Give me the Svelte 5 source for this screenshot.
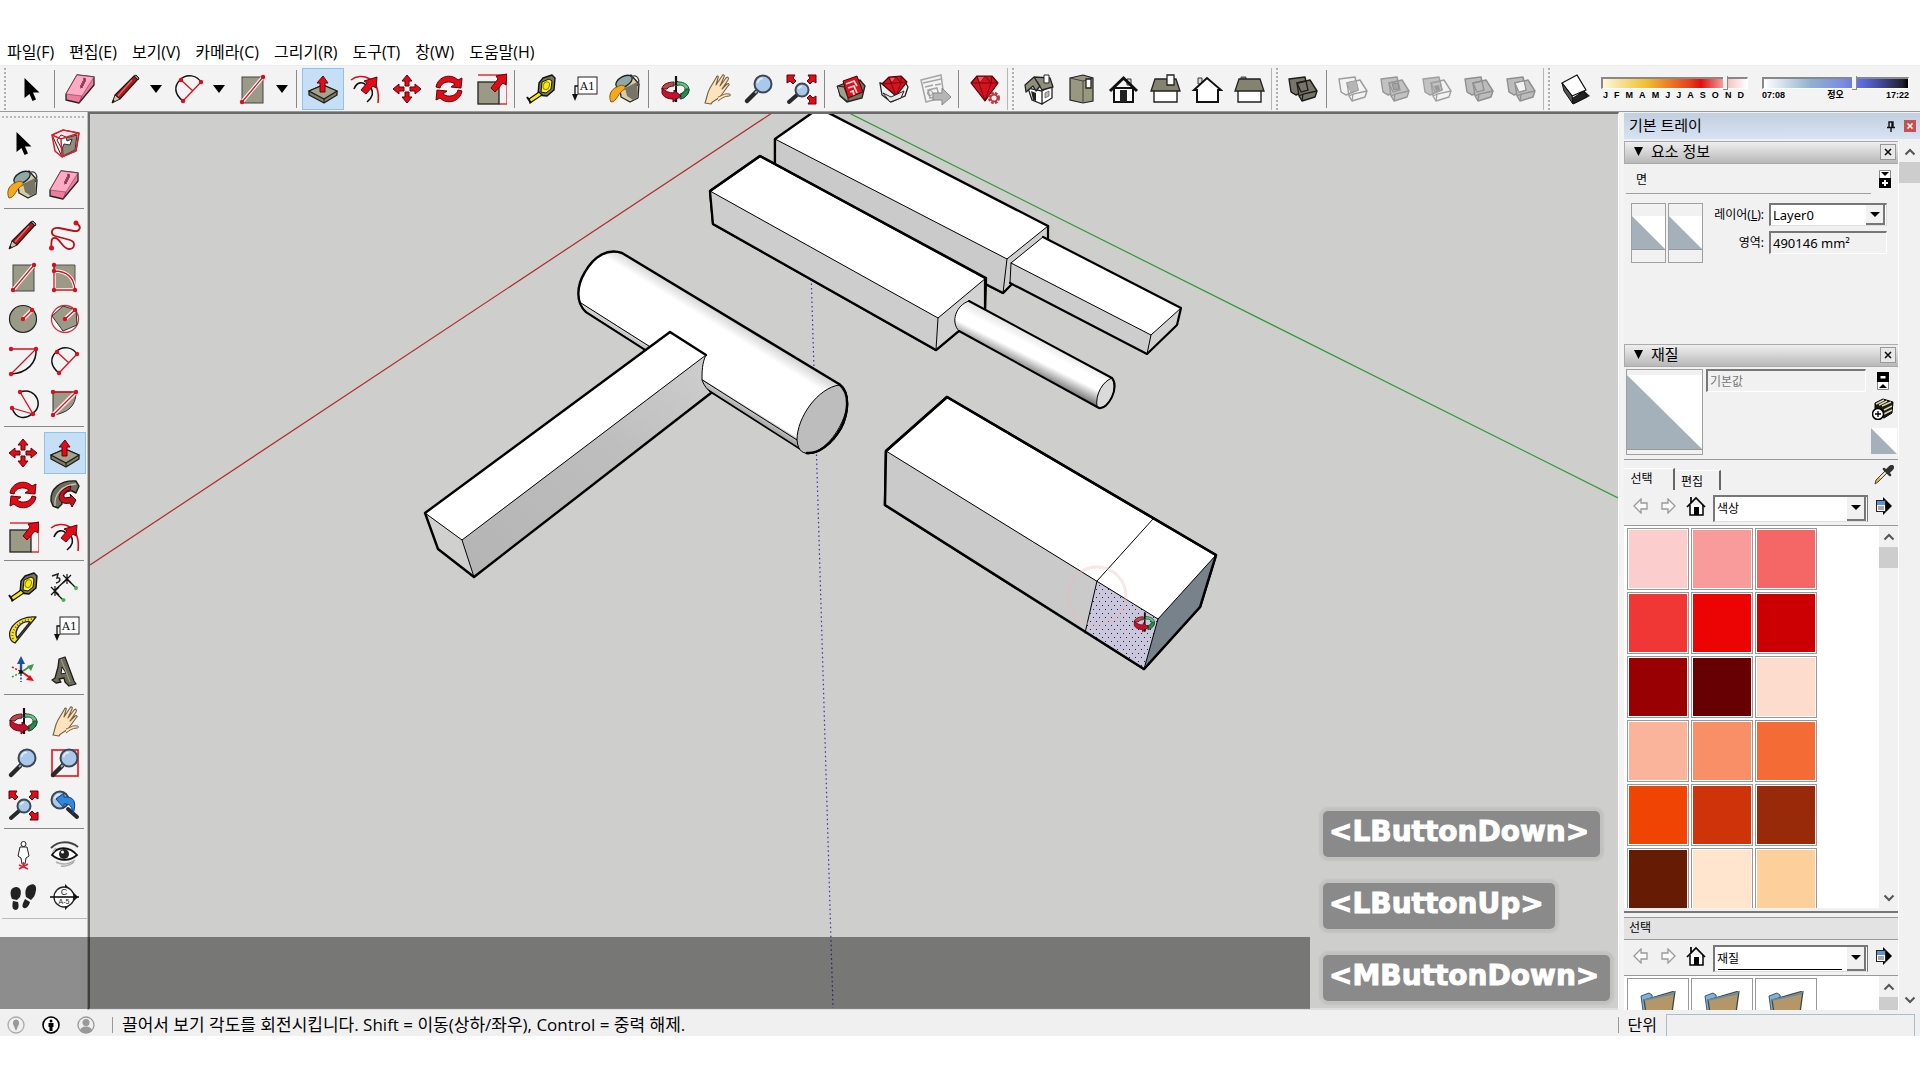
<script>
  const menus = ['파일(F)', '편집(E)', '보기(V)', '카메라(C)', '그리기(R)', '도구(T)', '창(W)', '도움말(H)'];

  const handle = '#9b9a86';
  const solidPair = (a, b, stroke) => `
    <path d="M2 6 18 4l3 13-12 5-5-3z" fill="${a}" stroke="${stroke}" stroke-width="1.400" stroke-linejoin="round"/>
    <path d="M4 19l5 3" fill="none" stroke="${stroke}"/>
    <path d="M10 10 23 7l7 11-2 6-13 4-3-5z" fill="${b}" stroke="${stroke}" stroke-width="1.400" stroke-linejoin="round"/>
    <path d="M12 23l4-2 14-3M16 21l-1 7M10 10l9-2 2 9-7 2z" fill="none" stroke="${stroke}" stroke-width="1.300"/>`;

  const orbit = `
    <path d="M17 4v24" stroke="#111" stroke-width="2"/>
    <path d="M15 9c-7 0-12 3-12 7h5c1-2 4-3 7-3z" fill="#b9474b" stroke="#551417"/>
    <path d="M17 8l-1 5 4-1c4 0 6 2 6 4s-2 4-5 5v5c5-1 9-5 9-9 0-5-5-8-10-8z" fill="#6cc08c" stroke="#14502b"/>
    <path d="M22 21c3-1 5-3 5-5h3c0 5-4 9-8 10z" fill="#2f8a4d" stroke="#14502b"/>
    <path d="M3 15v5c1 4 6 6 11 6v3l8-6-7-6v3c-5 0-9-2-12-5z" fill="#c8102e" stroke="#5a0712"/>
    <path d="M17 3v9M17 25v4" stroke="#111" stroke-width="2.2"/>`;
  const eraser = `
    <path d="M12 2 29 4v8L14 30 1 27v-6z" fill="#ee7d9c" stroke="#222" stroke-width="1.300" stroke-linejoin="round"/>
    <path d="M12 2 29 4 17 23 1 21z" fill="#ffabc6" stroke="#8a3350" stroke-width=".6"/>
    <path d="M17 23l-3 7" stroke="#8a3350" stroke-width=".8"/>
    <path d="M18 5l3 1-3 1 3 1-4 1 3 1-4 1 3 1-4 1 3 1-3 1" fill="none" stroke="#8a3350"/>`;
  const pencil = `
    <path d="M24 3l4 3-18 20-5-4z" fill="#b3161b" stroke="#1b1b1b" stroke-width="1.200"/>
    <path d="M22 7 8 23" stroke="#e36a6a" stroke-width="1.400"/>
    <path d="M24 3l2-1 3 3-1 2z" fill="#8c8c8c" stroke="#1b1b1b"/>
    <path d="M5 22l5 4-8 4z" fill="#d9c59a" stroke="#1b1b1b"/><path d="M3 26.500l2 1.500-3 2z" fill="#111"/>`;
  const arrowRed = 'fill="#e30b17" stroke="#5d0509" stroke-width="1" stroke-linejoin="round"';
  const dot = (x, y, r = 2.2) => `<circle cx="${x}" cy="${y}" r="${r}" fill="#d9101c"/>`;
  const lens = (x, y, r) => `<circle cx="${x}" cy="${y}" r="${r}" fill="#a9c8ea" stroke="#3c4654" stroke-width="2"/>
    <path d="M${x - r + 3} ${y - 1}a${r - 3} ${r - 3} 0 0 1 ${r - 3}-${r - 4}" fill="none" stroke="#e3effb" stroke-width="1.500"/>`;
  const zoomGlass = `<path d="M13 19 4 28" stroke="#26282c" stroke-width="4.500" stroke-linecap="round"/><path d="M15 17l-3 3" stroke="#9aa" stroke-width="2"/>${lens(20, 11, 8.500)}`;
  const label = `<rect x="11" y="4" width="19" height="17" fill="#fff" stroke="#222"/><path d="M11 13H8v9" fill="none" stroke="#111" stroke-width="1.300"/><path d="M5 21h6l-3 7z" fill="#111"/>
    <text x="20.500" y="17" text-anchor="middle" font-family="DejaVu Serif" font-size="11" fill="#111">A1</text>`;
  const arcPie = `<path d="M7 7c6-7 18-5 21 3M7 7c-6 6-6 14 3 21" fill="none" stroke="#111" stroke-width="1.500"/><path d="M8 7l12 11M28 9 10 28" fill="none" stroke="#d9101c" stroke-width="1.300"/>${dot(8, 7)}${dot(28, 9)}${dot(10, 28)}`;

  const icons = {
    cursor: '<path d="M9.500 5v20l5-4 3 7 3.500-1.500-3-7h6.500z" fill="#000"/>',
    eraser,
    pencil,
    arc: arcPie,
    rect: `<rect x="6" y="4" width="21" height="26" fill="${handle}" stroke="#444"/><path d="M6 29 27 4" stroke="#fff" stroke-width="3.500"/><path d="M6 29 27 4" stroke="#c9222c" stroke-width="1.400"/>${dot(6, 29)}${dot(27, 4)}`,
    push: `<path d="M2 18 16 12l14 6v4L17 30 2 22z" fill="#7e7d6a" stroke="#1d1d18" stroke-width="1.300" stroke-linejoin="round"/><path d="M2 18 16 12l14 6-13 8z" fill="#a3a28d" stroke="#1d1d18" stroke-width="1.200"/><path d="M17 26v4" stroke="#1d1d18"/><path d="M16 3l5 7h-3v9h-5v-9h-3z" ${arrowRed}/>`,
    offset: `<path d="M2 7C12-1 32 4 29 30" fill="none" stroke="#d9101c" stroke-width="1.600"/><path d="M5 16C8 8 14 9 17 12M22 15c3 5 1 10-4 14" fill="none" stroke="#111" stroke-width="1.600"/><path d="M28 4l-1 11-3-2-7 8-5-4 6-7-3-2z" ${arrowRed}/>`,
    move: `<path d="M16 2l5 6h-3v5h-4V8h-3zM16 30l5-6h-3v-5h-4v5h-3zM2 16l6-5v3h5v4H8v3zM30 16l-6-5v3h-5v4h5v3z" ${arrowRed}/>`,
    rotate: `<path d="M3 14C5 3 18 0 25 7l4-2-1 10-10-1 4-3C17 7 8 9 7 15z" ${arrowRed}/><path d="M29 18c-2 11-15 14-22 7l-4 2 1-10 10 1-4 3c5 4 14 2 15-4z" ${arrowRed}/>`,
    scale: `<path d="M3 2h29v29H24" fill="none" stroke="#e2303a" stroke-width="1.400"/><rect x="3" y="9" width="21" height="22" fill="${handle}" stroke="#222" stroke-width="1.300"/><path d="M32 1l-1 11-3-2-8 9-4-4 7-9-2-3z" ${arrowRed}/>`,
    tape: `<path d="M14 10 18 5l9-3 3 3-1 12-7 6-9-1z" fill="#77775f" stroke="#111" stroke-width="1.400" stroke-linejoin="round"/><path d="M17 9l7-3 3 2-1 8-5 4-5-1z" fill="#fff12b" stroke="#111"/><ellipse cx="21.500" cy="12.500" rx="3" ry="4" fill="#ffe800" stroke="#83821a" transform="rotate(20 21 12)"/><path d="M14 19 4 26l1 4 12-8z" fill="#ffe800" stroke="#111" stroke-width="1.200"/><path d="M2 24l4 6" stroke="#111" stroke-width="2"/>`,
    label,
    paint: `<path d="M10 9 22 2l8 9-1 14-8 4-9-5z" fill="#d8cda4" stroke="#222" stroke-width="1.300" stroke-linejoin="round"/><path d="M16 15l12-6 1 15-5 3-6-4z" fill="#77756a"/><ellipse cx="15" cy="8.500" rx="9" ry="5" transform="rotate(-30 15 8.500)" fill="#8fa8a9" stroke="#222" stroke-width="1.300"/><path d="M22 4c6-4 10 3 6 9" fill="none" stroke="#444" stroke-width="1.300"/><path d="M8 14c-6 2-9 9-6 15 6 0 7-10 14-13 1-4-4-5-8-2z" fill="#f6a81c" stroke="#8a5a08"/>`,
    orbit,
    hand: `<path d="M4 30c2-5 2-10 5-15L15 5c1-3 3-2 2 0l-2 7 6-9c1-2 3-1 2 1l-4 9 6-8c2-2 3 0 2 2l-6 9 5-5c2-1 3 1 1 2L19 24c-3 3-8 4-9 7z" fill="#fde3bd" stroke="#73603f" stroke-width="1.100" stroke-linejoin="round"/><path d="M17 24c4-1 6-4 11-3 2 0 2 2 0 2-5 0-8 3-11 5" fill="#fde3bd" stroke="#73603f"/>`,
    zoom: zoomGlass,
    extents: `<path d="M12 22l-8 7" stroke="#26282c" stroke-width="4" stroke-linecap="round"/>${lens(17, 17, 6.500)}<path d="M2 2h8L8 5l3 3-3 3-3-3-3 2zM31 2h-8l2 3-3 3 3 3 3-3 3 2zM31 31h-8l2-3-3-3 3-3 3 3 3-2z" ${arrowRed}/>`,
    warehouse: `<path d="M3 13l7-3 15-3 5 6-3 12-15 4-7-6z" fill="#75725f" stroke="#222" stroke-width="1.300"/><path d="M8 8 22 3l6 16-15 6z" fill="#d5121d" stroke="#3e0609"/><path d="M11 11l8-3 3 5M13 15l6-2 3 7M15 19l3-1 1 4" fill="none" stroke="#fbd9da" stroke-width="1.800"/><path d="M2 13l7 1 4 11v4l-8-7z" fill="#a19e8a" stroke="#222"/>`,
    extension: `<path d="M3 10l8 2 16-5 4 7-3 9-14 6-9-7z" fill="#f1f1f1" stroke="#222" stroke-width="1.300"/><path d="M5 11l7-7 12-1 6 6-11 14z" fill="#d5121d" stroke="#3e0609" stroke-width="1.200" stroke-linejoin="round"/><path d="M5 11l25-2M12 4l2 6 5 13 5-13V3M14 10l5-6 5 6" fill="none" stroke="#72080e"/><path d="M13 5l2 4 3-4z" fill="#f35a62"/><path d="M6 20l8 4 13-6-3 7-11 4z" fill="#e8e8e8" stroke="#222"/>`,
    layout: `<path d="M2 7 22 2l3 22-18 5z" fill="#f3f3f3" stroke="#a5a5a5" stroke-width="1.500"/><path d="M4 10l18-4M6 14l8-2M16 12l6-1M9 17l9-2 2 8-9 2z" fill="none" stroke="#a5a5a5" stroke-width="1.500"/><circle cx="11" cy="20" r="2.500" fill="none" stroke="#999"/><path d="M14 20h9v-5l9 9-9 8v-5h-9z" fill="#b5b5b5" stroke="#888"/>`,
    gem: `<path d="M2 10 8 3h15l6 7-13 18z" fill="#d5121d" stroke="#47070b" stroke-width="1.200" stroke-linejoin="round"/><path d="M2 10h27M8 3l2 7 6 18 6-18 1-7M10 10l6-7 6 7" fill="none" stroke="#72080e"/><path d="M9 4l2 5 4-5z" fill="#f35a62"/><circle cx="25" cy="25" r="4.500" fill="#efefef" stroke="#b23a40" stroke-width="3" stroke-dasharray="2.400 1.200"/><circle cx="25" cy="25" r="3.500" fill="none" stroke="#b23a40" stroke-width="1.800"/>`,
    iso: `<path d="M5 15 9 27l10 4V18zM19 31l10-6V12l-10 6z" fill="#fff" stroke="#222" stroke-width="1.300"/><path d="M2 12 11 4l6 9-4 5-3-5-7 6zM11 4l16 1 3 9-11 3z" fill="#8f8e79" stroke="#222" stroke-width="1.300" stroke-linejoin="round"/><path d="M21 2h5v8h-5z" fill="#fff" stroke="#222"/><path d="M8 18l5 2v8l-3-1z" fill="#222"/><path d="M22 20l4-2v5l-4 2z" fill="#bbb" stroke="#555" stroke-width=".7"/>`,
    top: `<path d="M5 5 18 2l10 3v23l-10 2-13-3z" fill="#98977f" stroke="#222" stroke-width="1.200"/><path d="M18 8v22M5 5l13 3 10-3" fill="none" stroke="#444"/><path d="M21 6h5v9h-5z" fill="#fff" stroke="#222" stroke-width="1.300"/>`,
    front: `<path d="M7 15h19v14H7z" fill="#fff" stroke="#111" stroke-width="2"/><path d="M13 17h7v12h-7z" fill="#222"/><path d="M20 6h4v6h-4z" fill="#ddd" stroke="#333"/><path d="M3 18 16.500 5 30 18" fill="none" stroke="#111" stroke-width="3"/>`,
    right: `<path d="M5 17h23v12H5z" fill="#fff" stroke="#222" stroke-width="1.400"/><path d="M6 6h21l4 12H2z" fill="#84836f" stroke="#222" stroke-width="1.300"/><path d="M18 2h7v10h-7z" fill="#fff" stroke="#222" stroke-width="1.300"/>`,
    back: `<path d="M7 5h4v6H7z" fill="#ddd" stroke="#333"/><path d="M3 17 16 5l14 12h-3v12H6V17z" fill="#fff" stroke="#111" stroke-width="2"/>`,
    left: `<path d="M5 17h23v12H5z" fill="#fff" stroke="#222" stroke-width="1.400"/><path d="M8 4h5v3H8z" fill="#888" stroke="#444"/><path d="M6 6h21l4 12H2z" fill="#84836f" stroke="#222" stroke-width="1.300"/>`,
    shell: solidPair('#77756a', '#77756a', '#1d1d18'),
    solid1: solidPair('none', 'none', '#9c9c9c') + '<path d="M10 10l9-2 2 9-7 2z" fill="#b5b5b5"/>',
    solid2: solidPair('#c2c2c2', '#c2c2c2', '#979797') + '<path d="M13 11l6-1 1 6-5 1z" fill="#a5a5a5" stroke="#8c8c8c"/>',
    solid3: solidPair('#c2c2c2', 'none', '#a0a0a0') + '<path d="M13 13l5-1 1 5-4 1z" fill="#999"/>',
    solid4: solidPair('#bcbcbc', '#bcbcbc', '#8f8f8f'),
    solid5: solidPair('#bcbcbc', '#bcbcbc', '#8f8f8f') + '<path d="M10 10l9-2 2 9-7 2z" fill="#f3f3f3" stroke="#8f8f8f"/>',
    shadow: `<path d="M15 31 31 23 22 15z" fill="#222"/><path d="M6 16l8 9 11-7 3 6-14 7z" fill="#222" stroke="#111"/><path d="M3 10 18 2l9 15-14 6z" fill="#fff" stroke="#111" stroke-width="1.300" stroke-linejoin="round"/><path d="M3 10l10 13 1 8L5 18z" fill="#555" stroke="#111"/>`,
    component: `<path d="M3 8 14 3l16 3-3 18-14 6z" fill="#f4e5e5" stroke="#222"/><path d="M13 12 28 8l-2 15-12 6z" fill="#8e8d7c" stroke="#333"/><path d="M8 13l4-5 5 2 1 4 5-2-2 6-6-1-2 5z" fill="#fff" stroke="#333"/><path d="M3 8 14 3l16 3-3 18-14 6L6 24zM3 8l9 4 18-6M12 12l1 18" fill="none" stroke="#d9202c" stroke-width="1.500"/>`,
    freehand: `<path d="M27 4c7 4 3 9-2 8L10 9C2 8 1 15 6 17l15 4c6 2 5 9-1 9-7 0-9-12-15-11-4 0-2 8-3 10" fill="none" stroke="#b5121c" stroke-width="1.800"/>${dot(27, 4, 2.500)}${dot(2.500, 29, 2.500)}`,
    pierect: `<path d="M5 4h21v25H5z" fill="${handle}" stroke="#555"/><path d="M5 10c12 0 20 6 21 19H5z" fill="${handle}" stroke="#fff" stroke-width="3.500"/><path d="M5 4v25h21C25 16 17 10 5 10" fill="none" stroke="#d9101c" stroke-width="1.300"/>${dot(5, 4)}${dot(5, 10)}${dot(5, 29)}${dot(26, 29)}`,
    circle: `<circle cx="16" cy="16" r="13.500" fill="${handle}" stroke="#222" stroke-width="1.200"/><path d="M16 16 25 7" stroke="#fff" stroke-width="4"/><path d="M16 16 25 7" stroke="#d9101c" stroke-width="1.500"/>${dot(16, 16)}${dot(25, 7)}`,
    polygon: `<circle cx="16" cy="16" r="13.500" fill="#fff" stroke="#d9303a" stroke-width="1.300"/><path d="M3 13 14 3l13 4 1 15-14 6z" fill="${handle}" stroke="#333"/><path d="M16 16 26 7" stroke="#fff" stroke-width="4"/><path d="M16 16 26 7" stroke="#d9101c" stroke-width="1.500"/>${dot(16, 16)}${dot(26, 7)}`,
    arc1: `<path d="M29 4c1 14-9 24-25 25" fill="none" stroke="#111" stroke-width="1.500"/><path d="M4 4h25L4 29" fill="none" stroke="#d9101c" stroke-width="1.300"/>${dot(4, 4)}${dot(29, 4)}${dot(4, 29)}`,
    arc2: arcPie,
    arc3: `<path d="M13 5C30-1 38 21 24 27M5 21c4 12 14 11 20 6" fill="none" stroke="#111" stroke-width="1.500"/><path d="M13 5l13 22L5 21" fill="none" stroke="#d9101c" stroke-width="1.300"/>${dot(13, 5)}${dot(26, 27)}${dot(5, 21)}`,
    pie: `<path d="M4 5h23c0 14-8 21-23 23z" fill="${handle}" stroke="#333"/><path d="M4 28 27 5" stroke="#fff" stroke-width="4"/><path d="M4 5h23L4 28" fill="none" stroke="#d9101c" stroke-width="1.400"/>${dot(4, 5)}${dot(27, 5)}${dot(4, 28)}`,
    follow: `<path d="M2 22C1 10 11 1 27 2l3 5-3 7-4-2C17 11 12 16 13 25l-4 4-5-2z" fill="#6f6e5d" stroke="#1d1d18" stroke-width="1.400" stroke-linejoin="round"/><path d="M6 27C5 15 13 6 27 5" fill="none" stroke="#c5c4b5" stroke-width="1.300"/><path d="M22 7l-1 4c-5 1-8 5-5 8l6-1-1-3 6 6-4 7-2-4C13 26 8 21 11 15c2-4 6-7 11-8z" fill="#c5121e" stroke="#41060a"/>`,
    dimension: `<path d="M5 20 18 8M18 8l8 8M6 21l8 8" stroke="#111" stroke-width="1.300"/><path d="M14 4l8 8M22 4l-8 8M18 3v10M2 16l8 8M10 16l-8 8M6 15v10" stroke="#111" stroke-width="1.200"/><circle cx="27" cy="17" r="2" fill="#43b649"/><circle cx="14.500" cy="29" r="2" fill="#43b649"/><path d="M3 5l6-2-1 4c4-1 4 4-1 5" fill="none" stroke="#222" stroke-width="1.500"/>`,
    protractor: `<path d="M29 4 8 30C2 28 1 20 5 14 10 7 19 3 29 4zM23 9c-4-1-8 1-11 4-3 4-4 8-2 12z" fill="#f4df2c" fill-rule="evenodd" stroke="#222" stroke-width="1.300" stroke-linejoin="round"/><path d="M6 26C3 18 12 7 25 6" fill="none" stroke="#6b6012" stroke-width="2" stroke-dasharray="1 2"/>`,
    axes: `<path d="M14 17V7" stroke="#1c4fa0" stroke-width="2.400"/><path d="M14 1l4 8h-8z" fill="#1c4fa0"/><path d="M14 19v8" stroke="#1c4fa0" stroke-dasharray="2 1.500" stroke-width="1.600"/><path d="M16 16l6-4" stroke="#3c9a48" stroke-width="2"/><path d="M27 9l-3 7-4-5z" fill="#3c9a48"/><path d="M5 22l8-4" stroke="#3c9a48" stroke-dasharray="2 1.500" stroke-width="1.500"/><path d="M15 17l7 5" stroke="#d9101c" stroke-width="2"/><path d="M27 26l-8-1 4-5z" fill="#d9101c"/><path d="M5 12l8 4" stroke="#d9101c" stroke-dasharray="2 1.500" stroke-width="1.500"/><circle cx="14" cy="17" r="2" fill="#111"/>`,
    text3d: `<path d="M10 4l6-2 9 24 2 3-7 2-4-4-1-4-5 1 2 3-5 1-4-3 3-2 3-11z" fill="#6c6b5a" stroke="#1d1d18" stroke-width="1.300" stroke-linejoin="round"/><path d="M13 12l-1 7 5-1z" fill="#f3f3f3" stroke="#1d1d18"/><path d="M12 4l9 23" stroke="#a8a793"/>`,
    zoomwin: `<rect x="3" y="3" width="26" height="26" fill="#f3f3f3" stroke="#e2202c" stroke-width="1.700"/>${zoomGlass}`,
    previous: `<path d="M19 20l9 8" stroke="#26282c" stroke-width="4" stroke-linecap="round"/>${lens(11, 11, 8.500)}<path d="M7 10 15 4v4c10-1 13 5 9 17-1-8-3-10-9-10v4z" fill="#2f88e0" stroke="#123e73"/>`,
    position: `<circle cx="16.500" cy="5" r="2.500" fill="#fff" stroke="#222"/><path d="M13 8h7l2 9-3 2-1 6h-3l-1-6-3-2z" fill="#fff" stroke="#222"/><path d="M12 26l9 4M21 25l-9 5M16.500 23v4" stroke="#e2202c" stroke-width="1.500"/>`,
    look: `<path d="M2 9c8-8 20-7 27-1" fill="none" stroke="#444" stroke-width="2"/><path d="M3 16c5-9 17-9 25 0-7 6-17 7-25 0z" fill="#fff" stroke="#111" stroke-width="1.800"/><circle cx="15" cy="15" r="5" fill="#222"/><circle cx="13.500" cy="13" r="1.500" fill="#fff"/><path d="M7 23c7 4 13 2 19-2M12 27c5 1 9-1 13-4M4 13l3-4" fill="none" stroke="#aaa" stroke-width="1.500"/>`,
    walk: `<path d="M6 7c5-3 10 1 7 9l-3 3-5-1C3 13 3 9 6 7zM6 20l5 1c1 4 1 7-2 8-4 0-4-4-3-9zM20 6c5-5 10-3 9 3-1 6-2 7-5 10l-5-3c-1-4-1-7 1-10zM18 18l5 3c-1 4-4 7-6 6-3-1-1-5 1-9z" fill="#222"/>`,
    section: `<path d="M16 3l13 13-13 13z" fill="#111"/><circle cx="15" cy="16" r="10" fill="#fff" stroke="#222" stroke-width="1.300"/><path d="M1 16h29" stroke="#111" stroke-width="1.600"/><text x="15" y="13.500" text-anchor="middle" font-family="Liberation Sans" font-size="9" fill="#222">C</text><text x="15" y="23" text-anchor="middle" font-family="Liberation Sans" font-size="7" fill="#222">A-5</text>`
  };

  const topBar = [
    { grip: true, items: ['cursor'] },
    { items: ['eraser'] },
    { split: true, items: ['pencil', 'arc', 'rect'] },
    { items: ['push', 'offset', 'move', 'rotate', 'scale'] },
    { items: ['tape', 'label', 'paint'] },
    { items: ['orbit', 'hand', 'zoom', 'extents'] },
    { items: ['warehouse', 'extension', 'layout'] },
    { items: ['gem'] },
    { grip: true, items: ['iso', 'top', 'front', 'right', 'back', 'left'] },
    { grip: true, items: ['shell'] },
    { items: ['solid1', 'solid2', 'solid3', 'solid4', 'solid5'] },
    { grip: true, items: ['shadow'] }
  ];
  const palette = [
    ['cursor', 'component', 'paint', 'eraser'],
    ['pencil', 'freehand', 'rect', 'pierect', 'circle', 'polygon', 'arc1', 'arc2', 'arc3', 'pie'],
    ['move', 'push', 'rotate', 'follow', 'scale', 'offset'],
    ['tape', 'dimension', 'protractor', 'label', 'axes', 'text3d'],
    ['orbit', 'hand', 'zoom', 'zoomwin', 'extents', 'previous'],
    ['position', 'look', 'walk', 'section']
  ];
  const months = ['J', 'F', 'M', 'A', 'M', 'J', 'J', 'A', 'S', 'O', 'N', 'D'];
  const colors = [
    '#fccdcd', '#f99b9b', '#f56767', '#f13636', '#ec0404', '#cc0003',
    '#990003', '#660003', '#fddccd', '#f9b49b', '#f88f67', '#f56b36',
    '#f04405', '#cf330a', '#982a09', '#661c04', '#ffe5cd', '#fccf9b'
  ];
  const keys = ['<LButtonDown>', '<LButtonUp>', '<MButtonDown>'];
  let layer = $state('Layer0');
  let month = $state(86);
  let hour = $state(63);
</script>

{#snippet icon(name)}
  <svg class="icon" viewBox="0 0 32 32" aria-hidden="true">{@html icons[name]}</svg>
{/snippet}

{#snippet tool(name)}
  <button class="tool" class:active={name === 'push'} aria-label={name}>{@render icon(name)}</button>
{/snippet}

{#snippet chevron(up)}
  <button class="chev" aria-label={up ? 'scroll up' : 'scroll down'}>
    <svg width="12" height="8" viewBox="0 0 12 8"><path d={up ? 'M1.500 6.500 6 2l4.500 4.500' : 'M1.500 1.500 6 6l4.500-4.500'} fill="none" stroke="#555" stroke-width="2" /></svg>
  </button>
{/snippet}

{#snippet combo(value, lab, cls)}
  <span class="combo {cls}">
    <select aria-label={lab}><option>{value}</option></select>
    <span class="drop"><svg width="10" height="5" viewBox="0 0 10 5"><path d="M0 0h10L5 5z" /></svg></span>
  </span>
{/snippet}

{#snippet tri()}
  <svg class="tri" viewBox="0 0 10 10" preserveAspectRatio="none" aria-hidden="true"><path d="M0 0v10h10z" fill="#a5b1ba" /></svg>
{/snippet}

{#snippet nav(value, cls)}
  <div class="nav">
    <button class="plain" aria-label="back"><svg width="16" height="16" viewBox="0 0 16 16"><path d="M1 8l7-7v4h6v6H8v4z" fill="#fafafa" stroke="#999" stroke-width="1.300" /></svg></button>
    <button class="plain fwd" aria-label="forward"><svg width="16" height="16" viewBox="0 0 16 16"><path d="M15 8 8 1v4H2v6h6v4z" fill="#fafafa" stroke="#999" stroke-width="1.300" /></svg></button>
    <button class="plain" aria-label="home"><svg width="20" height="20" viewBox="0 0 20 20"><path d="M4 9v10h13V9" fill="#fff" stroke="#000" stroke-width="1.500" /><path d="M1 11 10 2l9 9M5 7V1" fill="none" stroke="#000" stroke-width="1.700" /><path d="M8 11h5v8H8z" /></svg></button>
    {@render combo(value, value, cls)}
    <button class="plain" aria-label="details"><svg width="18" height="18" viewBox="0 0 18 18"><path d="M8 0l9 9-9 9z" /><rect x="1.500" y="3.500" width="9" height="11" fill="#fff" stroke="#222" /><path d="M2 4h8v4H2z" fill="#5b93d8" /><path d="M3 10h6M3 12h6" stroke="#555" /></svg></button>
  </div>
{/snippet}

{#snippet head(title)}
  <header class="head">
    <svg width="9" height="9" viewBox="0 0 9 9"><path d="M0 0h9L4.500 9z" /></svg>
    <h2>{title}</h2>
    <button class="x" aria-label="close {title}"><svg width="8" height="8" viewBox="0 0 8 8"><path d="M1 1l6 6M7 1 1 7" stroke="#111" stroke-width="1.600" /></svg></button>
  </header>
{/snippet}

<div class="app">
  <nav class="menu">
    {#each menus as m}<button>{m}</button>{/each}
  </nav>

  <div class="toolbar">
    {#each topBar as g, i}
      {#if g.grip}<span class="grip" class:first={i === 0}></span>{:else if !g.split}<span class="sep"></span>{/if}
      <div class="group" class:split={g.split}>
        {#each g.items as t}
          {@render tool(t)}
          {#if g.split}<button class="more" aria-label="{t} options"><svg width="12" height="8" viewBox="0 0 12 8"><path d="M0 0h12L6 8z" /></svg></button>{/if}
        {/each}
      </div>
    {/each}
    <div class="sliders">
      <div class="slider">
        <input class="date" type="range" aria-label="date" bind:value={month} />
        <div class="scale">{#each months as m}<span>{m}</span>{/each}</div>
      </div>
      <div class="slider">
        <input class="time" type="range" aria-label="time" bind:value={hour} />
        <div class="scale hours"><span>07:08</span><span>정오</span><span>17:22</span></div>
      </div>
    </div>
  </div>

  <main class="work">
    <aside class="palette">
      <span class="hgrip"></span>
      {#each palette as group}
        <div class="pgroup">
          {#each group as t}{@render tool(t)}{/each}
        </div>
      {/each}
    </aside>

    <section class="view" aria-label="model">
      <svg class="scene" viewBox="90 114 1528 894" preserveAspectRatio="xMinYMin slice">
        <defs>
          <linearGradient id="tube" gradientUnits="userSpaceOnUse" x1="736" y1="314" x2="688" y2="392">
            <stop offset="0" stop-color="#bdbdbd" /><stop offset=".22" stop-color="#fff" /><stop offset=".8" stop-color="#fff" /><stop offset="1" stop-color="#d0d0d0" />
          </linearGradient>
          <linearGradient id="under" gradientUnits="userSpaceOnUse" x1="690" y1="372" x2="684" y2="382">
            <stop offset="0" stop-color="#d0d0d0" /><stop offset="1" stop-color="#8e8e8e" />
          </linearGradient>
          <linearGradient id="peg" gradientUnits="userSpaceOnUse" x1="1040" y1="339" x2="1025" y2="369">
            <stop offset="0" stop-color="#e6e6e6" /><stop offset=".3" stop-color="#fff" /><stop offset=".6" stop-color="#fff" /><stop offset="1" stop-color="#808080" />
          </linearGradient>
          <linearGradient id="shade" x1="0" y1="1" x2="1" y2="0"><stop offset="0" stop-color="#b4b4b4" /><stop offset=".6" stop-color="#bebebe" /><stop offset="1" stop-color="#cecece" /></linearGradient>
          <pattern id="dots" width="6" height="8" patternUnits="userSpaceOnUse">
            <rect width="6" height="8" fill="#c9c7d9" /><path d="M1 1h1v1H1zM4 5h1v1H4z" fill="#1b1b66" />
          </pattern>
        </defs>
        <path d="M90 565 772 113" stroke="#b02a2a" stroke-width="1.200" />
        <path d="M849 113 1618 498" stroke="#2f9a35" stroke-width="1.200" />
        <path d="M811 270 833 1008" stroke="#3333b0" stroke-width="1.200" stroke-dasharray="1.500 3" />

        <g stroke="#000" stroke-linejoin="round" stroke-linecap="round">
          <path d="M775 139 819 108 1048 226 1047 246 1003 293 775 176z" fill="#fff" stroke-width="2.400" />
          <path d="M775 139 1007 259 1003 293 775 176z" fill="#cacaca" stroke="none" />
          <path d="M1007 259 1048 226 1047 246 1003 293z" fill="#cfcfcf" stroke="none" />
          <path d="M775 139 1007 259 1048 226M1007 259 1003 293" fill="none" stroke-width="1" />
          <path d="M775 139V176L1003 293 1012 284M1048 226V242" fill="none" stroke-width="2.200" />

          <path d="M1011 263 1043 237 1181 308 1177 325 1147 354 1010 283z" fill="#fff" stroke="none" />
          <path d="M1011 263 1151 335 1147 354 1010 283z" fill="#cdcdcd" stroke="none" />
          <path d="M1151 335 1181 308 1177 325 1147 354z" fill="#d2d2d2" stroke="none" />
          <path d="M1010 283 1011 263 1043 237M1011 263 1151 335 1181 308M1151 335 1147 354" fill="none" stroke-width="1" />
          <path d="M1043 237 1181 308 1177 325 1147 354 1010 283" fill="none" stroke-width="2.200" />

          <path d="M710 191 760 156 986 278 985 309 936 350 713 224z" fill="#fff" stroke-width="2.400" />
          <path d="M710 191 938 318 936 350 713 224z" fill="#cdcdcd" stroke="none" />
          <path d="M938 318 986 278 985 309 936 350z" fill="#d2d2d2" stroke="none" />
          <path d="M710 191 938 318 986 278M938 318 936 350" fill="none" stroke-width="1" />
          <path d="M710 191 713 224 936 350 985 309V278L760 156z" fill="none" stroke-width="2.200" />

          <path d="M969 301 1112 378C1120 387 1108 410 1099 408L959 331C950 322 955 306 969 301z" fill="url(#peg)" stroke="none" />
          <path d="M969 301C956 305 950 322 959 331" fill="none" stroke-width="1" />
          <path d="M1112 378C1103 381 1095 394 1097 407 1108 411 1119 390 1112 378z" fill="#dadada" stroke-width="1" />
          <path d="M969 301 1112 378C1120 387 1108 410 1099 408L959 331" fill="none" stroke-width="2" />

          <path d="M622 253 839 384C851 393 848 414 841 428 832 444 818 454 807 453L586 312C575 302 577 285 585 272 594 256 608 248 622 253z" fill="url(#tube)" stroke-width="2.400" />
          <path d="M581 303 797 438 803 450 588 312z" fill="url(#under)" stroke="none" />
          <path d="M581 303 797 440" stroke-width="1" />
          <path d="M839 385C818 388 797 417 797 440 798 452 804 454 810 453 828 451 847 421 847 402 847 393 845 388 839 385z" fill="#bdbdbd" stroke-width="1" />
          <path d="M839 384C851 393 848 414 841 428 832 444 818 454 807 453" fill="none" stroke-width="2.400" />

          <path d="M425 513 670 332 706 355C702 363 702 372 702 380 704 386 708 390 711 393L474 577 438 549z" fill="#fff" stroke="none" />
          <path d="M462 540 706 355C702 363 702 372 702 380 704 386 708 390 711 393L474 577z" fill="url(#shade)" stroke="none" />
          <path d="M425 513 462 540 474 577 438 549z" fill="#d0d0cf" stroke="none" />
          <path d="M425 513 462 540 706 355C702 363 702 372 702 380 704 386 708 390 711 393M462 540 474 577" fill="none" stroke-width="1" />
          <path d="M706 355 670 332 425 513 438 549 474 577 711 393" fill="none" stroke-width="2.400" />

          <path d="M886 451 947 397 1216 555 1200 607 1144 669 885 505z" fill="#fff" stroke-width="2.600" />
          <path d="M886 451 1097 581 1085 633 885 505z" fill="#cacaca" stroke="none" />
          <path d="M1097 581 1158 619 1144 669 1085 633z" fill="url(#dots)" stroke="none" />
          <path d="M1158 619 1216 555 1200 607 1144 669z" fill="#78828b" stroke="none" />
          <path d="M886 451 1158 619 1216 555M1158 619 1144 669M1153 519 1097 581 1085 633" fill="none" stroke-width="1" />
          <path d="M886 451 947 397 1216 555 1200 607 1144 669 885 505z" fill="none" stroke-width="2.400" />
        </g>
        <circle cx="1097" cy="596" r="29" fill="none" stroke="#e8b9b9" stroke-opacity=".35" stroke-width="3" />
        <svg x="1132" y="610" width="24" height="24" viewBox="0 0 32 32">{@html orbit}</svg>
      </svg>
    </section>

    <div class="overlay">
      <div class="dim"></div>
      <div class="keys">{#each keys as k}<kbd>{k}</kbd>{/each}</div>
    </div>

    <aside class="tray">
      <header class="title">
        <h1>기본 트레이</h1>
        <button class="plain" aria-label="pin"><svg width="8" height="11" viewBox="0 0 8 11"><path d="M2 6V1h4v5M0 6.500h8M4 7v4M5 1v5" fill="none" stroke="#111" stroke-width="1.400" /></svg></button>
        <button class="red" aria-label="close tray"><svg width="6" height="6" viewBox="0 0 6 6"><path d="M.5.5l5 5M5.500.5l-5 5" stroke="#fff" stroke-width="1.500" /></svg></button>
      </header>
      <div class="body">
        <div class="panels">
          {@render head('요소 정보')}
          <div class="info">
            <div class="kind"><span>면</span>
              <button class="plain" aria-label="expand"><svg width="12" height="18" viewBox="0 0 12 18"><path d="M.5.5h11v8H.5z" fill="#fff" stroke="#888" /><path d="M2 2h8L6 6z" /><path d="M0 8h12v10H0z" /><path d="M3 13h6M6 10v6" stroke="#fff" stroke-width="2" /></svg></button>
            </div>
            <div class="entity">
              <span class="thumb">{@render tri()}</span>
              <span class="thumb">{@render tri()}</span>
              <div class="fields">
                <label for="layer">레이어(<u>L</u>):</label>
                <span class="combo"><select id="layer" bind:value={layer}><option>Layer0</option></select><span class="drop"><svg width="10" height="5" viewBox="0 0 10 5"><path d="M0 0h10L5 5z" /></svg></span></span>
                <label for="area">영역:</label>
                <input id="area" class="sunk" value="490146 mm²" readonly />
              </div>
            </div>
          </div>
          {@render head('재질')}
          <div class="mat">
            <span class="thumb big">{@render tri()}</span>
            <input class="sunk" aria-label="material name" value="기본값" disabled />
            <div class="side">
              <button class="plain" aria-label="collapse"><svg width="12" height="18" viewBox="0 0 12 18"><path d="M.5 9.500h11v8H.5z" fill="#fff" stroke="#888" /><path d="M2 16h8l-4-4z" /><path d="M0 0h12v10H0z" /><path d="M3.500 4h5v2.500h-5z" fill="#fff" /></svg></button>
              <button class="plain" aria-label="create material"><svg width="22" height="22" viewBox="0 0 22 22"><path d="M3 5l8-4 10 3-1 11-8 5-9-4z" fill="#1a1a14" stroke="#000" /><path d="M4 6l8-4M7 7l8-4M10 8l9-4M12 12l8-4M12 16l8-4" stroke="#d7d2a8" stroke-width="1.500" /><circle cx="6" cy="16" r="5.500" fill="#fff" stroke="#000" stroke-width="1.500" /><path d="M6 13v6M3 16h6" stroke="#000" stroke-width="1.300" /></svg></button>
              <span class="mini">{@render tri()}</span>
            </div>
          </div>
          <div class="tabs">
            <button class="tab on">선택</button><button class="tab">편집</button>
            <button class="plain pick" aria-label="sample"><svg width="20" height="20" viewBox="0 0 20 20"><path d="M13 8 4 17l-3 2 1-4 9-9z" fill="#e2b04a" stroke="#444" /><path d="M13 6 6 13" stroke="#eee" stroke-width="1.500" /><path d="M10 4l6 6M12 6l4-4c2-2 4 0 2 2l-4 4z" fill="#333" stroke="#333" stroke-width="2.500" stroke-linecap="round" /></svg></button>
          </div>
          {@render nav('색상', '')}
          <div class="list">
            <div class="swatches">{#each colors as c}<button class="sw" aria-label={c} style="background-color:{c}"></button>{/each}</div>
            <div class="bar">{@render chevron(true)}<span class="knob"></span>{@render chevron(false)}</div>
          </div>
          <div class="splitter"></div>
          <div class="band">선택</div>
          {@render nav('재질', 'focus')}
          <div class="list short">
            <div class="swatches">
              {#each [1, 2, 3] as n}
                <button class="folder" aria-label="folder {n}"><svg width="36" height="36" viewBox="0 0 36 36"><path d="M1 5l8-3 3 2 3 30H5z" fill="#7fb2d6" stroke="#456" /><path d="M4 9l31-9-5 36H8z" fill="#b49669" stroke="#444" stroke-width="1.300" /><path d="M4 9 32 3l3-3" fill="none" stroke="#5b8fb0" stroke-width="1.500" /></svg></button>
              {/each}
            </div>
            <div class="bar">{@render chevron(true)}<span class="knob"></span></div>
          </div>
        </div>
        <div class="bar outer">{@render chevron(true)}<span class="knob"></span>{@render chevron(false)}</div>
      </div>
    </aside>
  </main>

  <footer class="status">
    <svg width="18" height="18" viewBox="0 0 18 18"><circle cx="9" cy="9" r="8" fill="none" stroke="#aaa" stroke-width="1.300" /><path d="M9 15 6 8c-1-6 7-6 6 0z" fill="#999" /></svg>
    <svg width="18" height="18" viewBox="0 0 18 18"><circle cx="9" cy="9" r="8" fill="#fff" stroke="#000" stroke-width="1.600" /><circle cx="9" cy="5" r="1.500" /><path d="M6.500 7h5v4h-1v4h-3v-4h-1z" /></svg>
    <svg width="18" height="18" viewBox="0 0 18 18"><circle cx="9" cy="9" r="8" fill="#eee" stroke="#999" stroke-width="1.300" /><circle cx="9" cy="6.500" r="3.500" fill="#999" /><path d="M3 15c0-6 12-6 12 0-3 3-9 3-12 0z" fill="#999" /></svg>
    <span class="rule"></span>
    <p>끌어서 보기 각도를 회전시킵니다. Shift = 이동(상하/좌우), Control = 중력 해제.</p>
    <span class="rule"></span>
    <label for="unit">단위</label>
    <input id="unit" />
  </footer>
</div>

<style>
  :global(body) { margin: 0; background: #fff; }
  .app {
    display: flex; flex-direction: column; box-sizing: border-box; min-height: 100vh; padding: 36px 0 44px;
    font-family: "Noto Sans", "Noto Sans CJK KR", sans-serif; font-size: 12px; color: #000;
  }
  button, input, select { font: inherit; color: inherit; margin: 0; border-radius: 0; }
  button { padding: 0; border: 0; background: none; display: grid; place-items: center; }
  h1, h2, p { margin: 0; font-weight: 400; }
  svg { display: block; }

  .menu { display: flex; gap: 15px; height: 29px; padding: 2px 7px 0; box-sizing: border-box; align-items: center; font-size: 16px; line-height: 20px; font-family: "Open Sans", "Noto Sans CJK KR", sans-serif; }

  .toolbar { display: flex; height: 47px; box-sizing: border-box; background: #f3f3f3; border-top: 1px solid #ececec; border-bottom: 1px solid #9a9a9a; align-items: center; }
  .group { display: flex; flex: none; }
  .group.split { padding-left: 3px; }
  .tool { width: 42px; height: 42px; box-sizing: border-box; flex: none; }
  .tool.active { background: #c5dff6; border: 1px solid #90c1ec; }
  .icon { width: 32px; height: 32px; }
  .more { width: 21px; padding-right: 4px; }
  .sep { width: 8px; height: 38px; flex: none; background: linear-gradient(#888, #888) 2px 0 / 1px 100% no-repeat; }
  .grip { width: 12px; height: 42px; flex: none; background: linear-gradient(#b5b5b5, #b5b5b5) 1px 0 / 1px 100% no-repeat, repeating-linear-gradient(#b0b0b0 0 2px, transparent 2px 4px) 6px 0 / 2px 100% no-repeat; }
  .grip.first { width: 10px; background: repeating-linear-gradient(#b0b0b0 0 2px, transparent 2px 4px) 4px 0 / 2px 100% no-repeat; }
  .sliders { display: flex; gap: 14px; padding-left: 5px; }
  .slider { width: 147px; display: flex; flex-direction: column; }
  .slider input { appearance: none; width: 100%; height: 12px; border: 1px solid #fff; border-top: 2px solid #888; border-left: 2px solid #888; box-sizing: border-box; }
  .date { background: linear-gradient(90deg, #fff6dd, #f0c030 30%, #e8401a 60%, #e01010 68%, #f8c8c8 88%, #fff); }
  .time { background: linear-gradient(90deg, #fff, #8fb0cf 33%, #7a8ce8 55%, #5566dd 70%, #223 96%, #000); }
  .slider input::-webkit-slider-thumb { appearance: none; width: 5px; height: 14px; background: #f3f3f3; border-right: 1px solid #888; border-bottom: 1px solid #888; }
  .scale { display: flex; justify-content: space-between; padding: 0 4px 0 2px; font: 700 9px/12px "Liberation Sans", "Noto Sans CJK KR", sans-serif; }
  .scale.hours { padding: 0; }

  .work { position: relative; display: flex; flex: 1; min-height: 898px; background: #f3f3f3; }
  .palette { width: 88px; box-sizing: border-box; padding: 4px 0 0 2px; border-right: 1px solid #bbb; background: #f3f3f3; }
  .hgrip { display: block; width: 82px; height: 2px; margin-bottom: 4px; background: repeating-linear-gradient(90deg, #b5b5b5 0 2px, transparent 2px 4px); }
  .pgroup { display: grid; grid-template-columns: 42px 42px; }
  .pgroup + .pgroup { padding-top: 8px; background: linear-gradient(#888, #888) 2px 2px / 80px 1px no-repeat; }
  .pgroup:last-child { box-shadow: 0 1px #bbb; }

  .view { flex: 1; min-width: 0; border: 2px solid #6a6a6a; border-right: 1px solid #fff; border-bottom: 2px solid #ddd; background: #cececc; position: relative; }
  .scene { position: absolute; inset: 0; width: 100%; height: 100%; }

  .overlay { position: absolute; left: 0; right: 302px; bottom: 1px; display: flex; align-items: flex-end; pointer-events: none; }
  .dim { flex: 1; height: 72px; background: rgba(0, 0, 0, .42); }
  .keys { width: 308px; box-sizing: border-box; flex: none; padding: 0 0 8px 13px; display: flex; flex-direction: column; gap: 26px; align-items: flex-start; }
  kbd { box-sizing: border-box; height: 46px; padding: 0 11px 0 6px; border-radius: 5px; background: #8a8a8a; box-shadow: 0 0 2px 4px rgba(0, 0, 0, .06); color: #fff; font: 700 28px/42px "DejaVu Sans", sans-serif; -webkit-text-stroke: 1px #fff; white-space: nowrap; }

  .tray { width: 296px; margin-left: 5px; padding-top: 1px; display: flex; flex-direction: column; background: #f1f1f1; flex: none; }
  .title { display: flex; align-items: center; height: 26px; padding: 0 4px 0 5px; gap: 9px; background: linear-gradient(#c2cfdf, #d7e3f2); }
  .title h1 { flex: 1; font-size: 15px; line-height: 22px; padding-bottom: 2px; }
  .red { width: 12px; height: 12px; background: #c75050; }
  .body { flex: 1; display: flex; padding-top: 2px; min-height: 0; }
  .panels { flex: 1; min-width: 0; display: flex; flex-direction: column; border-right: 1px solid #fff; }
  .head { display: flex; align-items: center; gap: 8px; height: 23px; box-sizing: border-box; padding: 0 2px 2px 9px; background: linear-gradient(#efefef, #b8b8b8); border: 1px solid #aaa; border-right: 0; }
  .head h2 { flex: 1; font-size: 15px; line-height: 20px; padding-bottom: 1px; }
  .x { width: 16px; height: 16px; background: #e8e8e8; border: 1px solid #999; }

  .info { height: 180px; }
  .kind { display: flex; justify-content: space-between; align-items: center; height: 30px; padding: 0 7px 0 12px; background: linear-gradient(#a0a0a0, #a0a0a0) 2px 100% / 245px 1px no-repeat; }
  .entity { display: flex; gap: 2px; padding: 9px 11px 0 7px; }
  .thumb { display: block; box-sizing: border-box; width: 35px; height: 60px; border: 1px solid #a0a0a0; padding-top: 12px; }
  .thumb.big { width: 77px; height: 86px; padding-top: 5px; flex: none; }
  .tri { width: 100%; height: 33px; background: #fff; border-bottom: 1px solid #999; }
  .big .tri { height: 74px; }
  .mini { width: 26px; align-self: flex-end; }
  .mini .tri { height: 26px; border: 0; }
  .fields { flex: 1; display: grid; grid-template-columns: 1fr 118px; gap: 5px; grid-auto-rows: 23px; align-items: center; justify-items: end; font-size: 13px; }
  .fields label { font-size: 12px; line-height: 20px; white-space: nowrap; }
  .sunk { box-sizing: border-box; width: 100%; height: 23px; padding: 0 2px; background: #f1f1f1; border: 1px solid #fff; border-top: 2px solid #777; border-left: 2px solid #777; }
  .combo { position: relative; display: block; width: 100%; height: 23px; }
  .combo select { appearance: none; box-sizing: border-box; width: 100%; height: 100%; padding: 0 2px; background: #fff; border: 1px solid #ddd; border-top: 2px solid #777; border-left: 2px solid #777; }
  .drop { position: absolute; right: 2px; top: 2px; bottom: 1px; width: 19px; background: #f1f1f1; border-right: 2px solid #777; border-bottom: 2px solid #777; box-sizing: border-box; display: grid; place-items: center; pointer-events: none; }

  .mat { display: flex; box-sizing: border-box; height: 93px; padding: 2px 1px 0 2px; gap: 3px; border-bottom: 1px solid #999; }
  .mat .sunk { flex: 0 0 160px; color: #777; }
  .side { flex: 1; display: flex; flex-direction: column; align-items: center; gap: 8px; padding-top: 3px; }
  .tabs { display: flex; align-items: flex-end; height: 30px; }
  .tab { height: 20px; width: 46px; padding-right: 10px; border-top: 1px solid #fff; border-right: 2px solid #666; box-sizing: border-box; }
  .tab.on { height: 22px; width: 51px; padding: 0 14px 3px 0; }
  .pick { margin: 0 4px 5px auto; }
  .nav { display: flex; align-items: center; box-sizing: border-box; height: 36px; padding: 0 5px 3px 9px; border-bottom: 1px solid #999; }
  .nav .fwd { margin: 0 10px 0 11px; }
  .nav .combo { flex: 1; height: 27px; margin: 4px 7px 0 7px; }
  .nav .combo select { border-right-color: #777; }
  .focus::after { content: ""; position: absolute; left: 5px; right: 26px; bottom: 2px; height: 1px; background: #000; }
  .list { flex: 1 1 0; min-height: 0; display: flex; background: #fff; overflow: hidden; }
  .list.short { flex: 0 0 34px; }
  .swatches { flex: 1; display: grid; grid-template-columns: repeat(3, 62px); grid-auto-rows: 62px; gap: 2px; padding: 2px 3px; align-content: start; }
  .sw { border: 1px solid #999; box-shadow: inset 0 0 0 1px #fff; }
  .folder { border: 1px solid #999; background: #fff; }
  .bar { width: 19px; flex: none; display: flex; flex-direction: column; background: #f1f1f1; }
  .bar .chev { height: 21px; width: 100%; flex: none; }
  .knob { height: 21px; background: #cdcdcd; flex: none; }
  .knob + .chev { margin-top: auto; }
  .outer { width: 21px; }
  .splitter { height: 9px; flex: none; background: linear-gradient(#777, #777) 0 3px / 100% 2px no-repeat; }
  .band { height: 23px; box-sizing: border-box; flex: none; padding-left: 5px; line-height: 20px; background: #e4e3e4; border: solid #999; border-width: 1px 0; }

  .status { display: flex; align-items: center; height: 26px; box-sizing: border-box; gap: 17px; padding: 4px 5px 0 7px; background: #f1f0f1; font-size: 17px; font-family: "Open Sans", "Noto Sans CJK KR", sans-serif; line-height: 22px; overflow: hidden; }
  .status svg { flex: none; }
  .rule { width: 1px; height: 16px; background: #999; flex: none; }
  .status p { flex: 1; margin-left: -8px; white-space: nowrap; }
  .status label { margin: 0 -8px; font-size: 16px; }
  .status input { width: 249px; height: 22px; box-sizing: border-box; border: 1px solid #a9bdd3; border-bottom: 0; background: #f1f0f1; }
</style>
